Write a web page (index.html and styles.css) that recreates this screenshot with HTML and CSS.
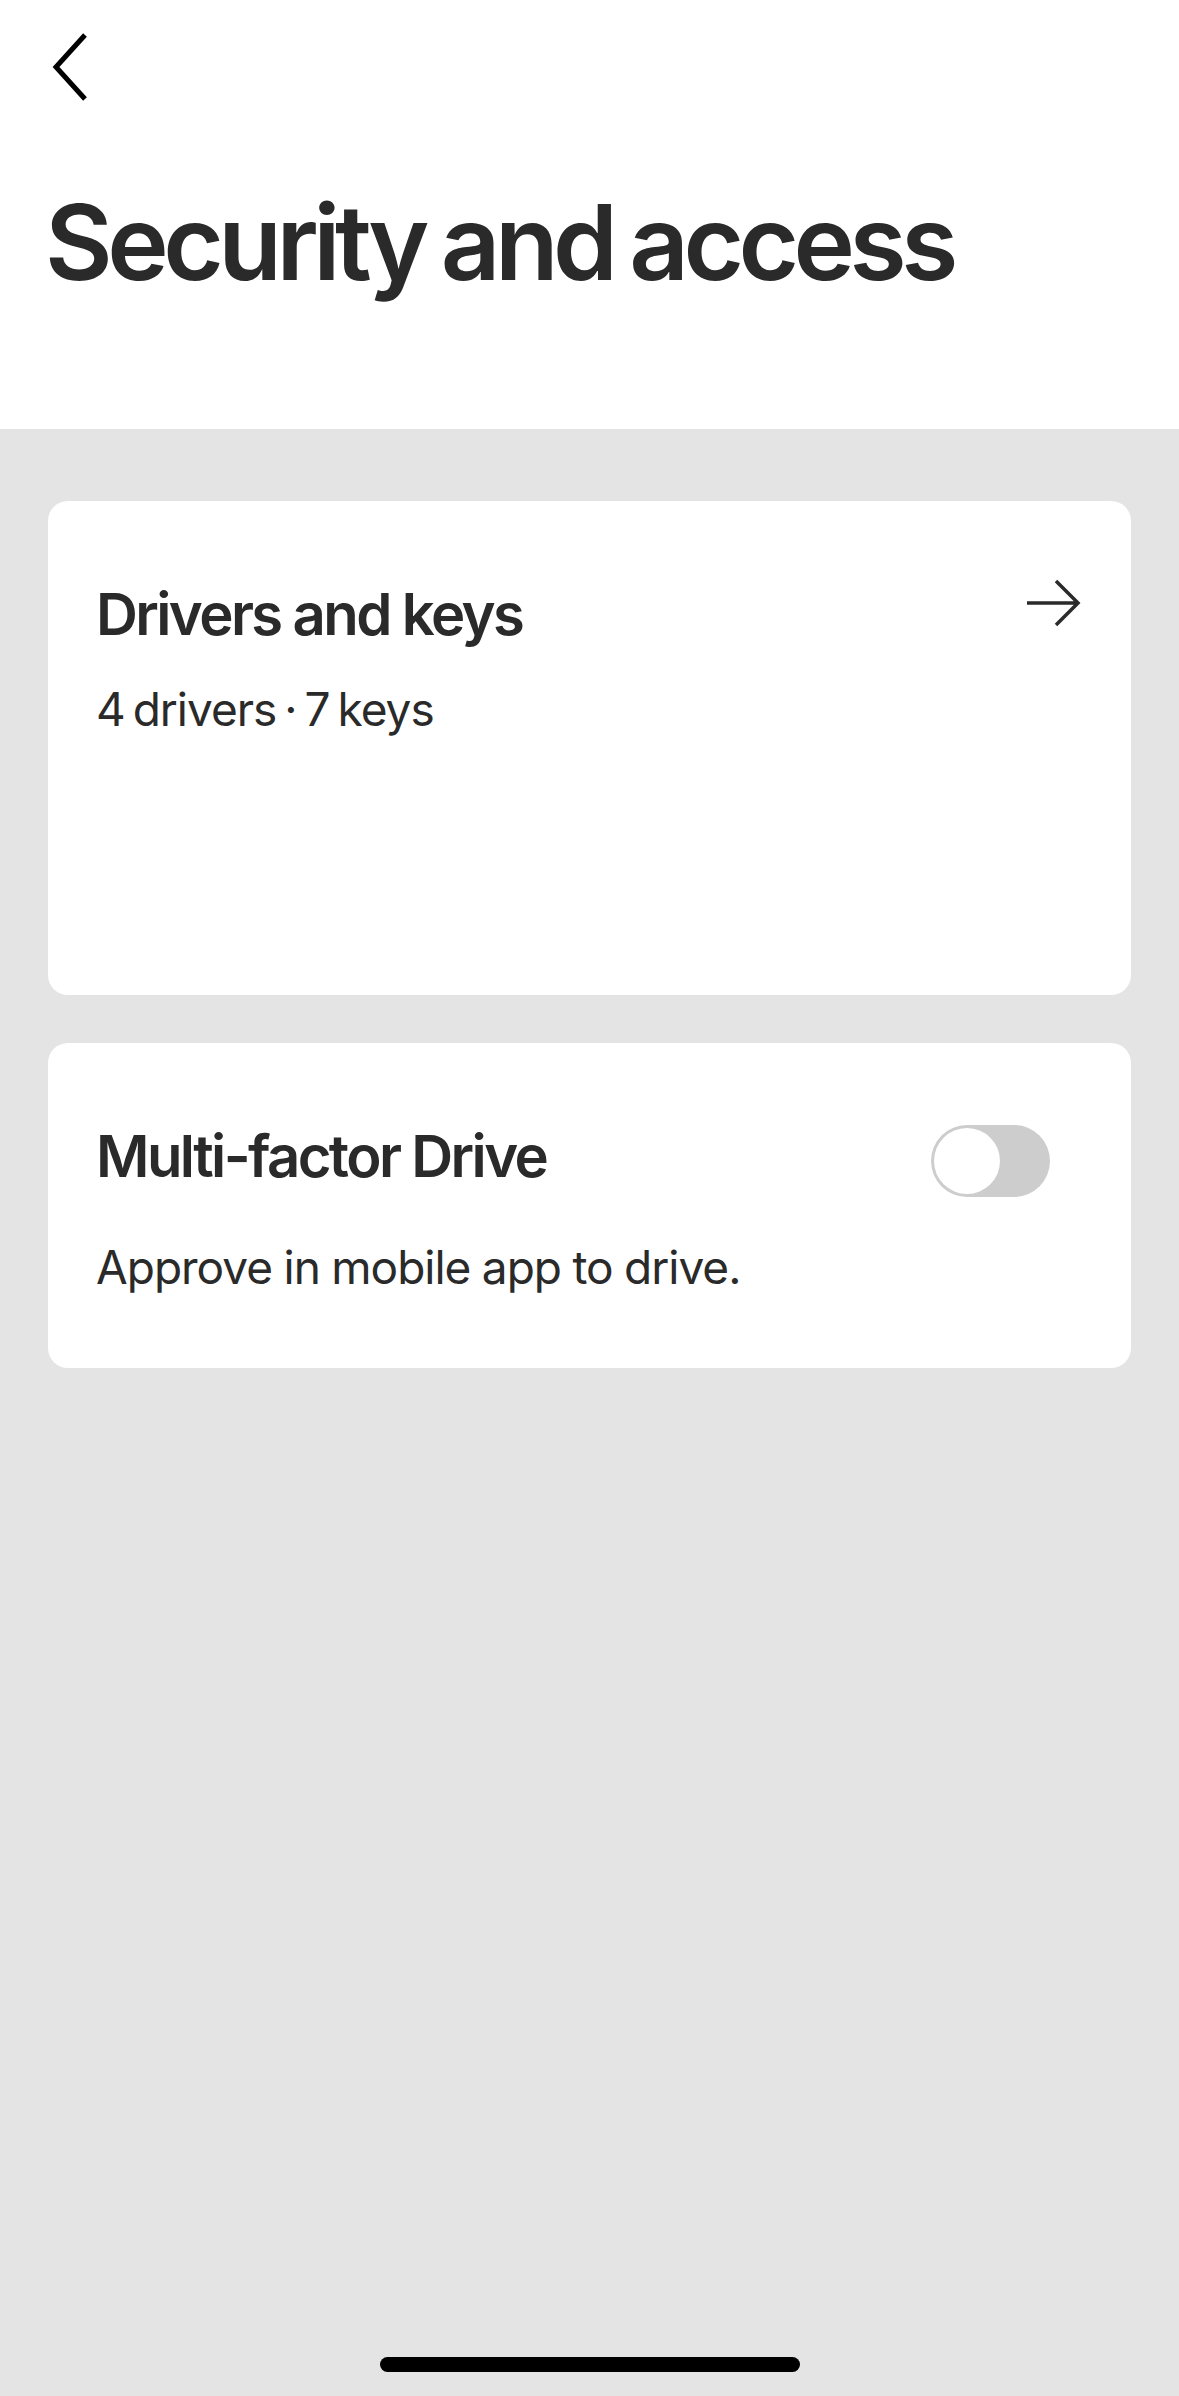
FILE: index.html
```html
<!DOCTYPE html>
<html lang="en">
  <head>
    <meta charset="utf-8">
    <title>Security and access</title>
    <link rel="stylesheet" href="styles.css">
  </head>
  <body>

    <header class="topBar">
      <button class="backButton" aria-label="Back">
        <svg width="40" height="74" viewBox="0 0 40 74">
          <path d="M35 5 L6 37 L35 69" fill="none" stroke="#000" stroke-width="5"/>
        </svg>
      </button>
      <h1>Security and access</h1>
    </header>

    <main class="settings">
      <a class="card driversCard" href="#">
        <div class="cardRow">
          <h2>Drivers and keys</h2>
          <svg class="arrow" width="58" height="50" viewBox="0 0 58 50">
            <path d="M2 25 H53 M31 3 L53 25 L31 47" fill="none" stroke="#2a2a2a" stroke-width="3.5"/>
          </svg>
        </div>
        <p class="cardSub">4 drivers · 7 keys</p>
      </a>

      <section class="card mfaCard">
        <div class="cardRow">
          <h2>Multi-factor Drive</h2>
          <span class="toggle" role="switch" aria-checked="false"><span class="knob"></span></span>
        </div>
        <p class="cardSub mfaSub">Approve in mobile app to drive.</p>
      </section>
    </main>

    <div class="homeBar"></div>

  </body>
</html>
```

FILE: styles.css
```css
body {
  margin: 0;
  min-height: 2396px;
  font-family: Inter, "Noto Sans", sans-serif;
  background: #e4e4e4;
  color: #2a2a2a;
  position: relative;
}
.topBar {
  background: #fff;
  height: 429px;
  box-sizing: border-box;
  padding: 30px 0 0 50px;
}
.backButton {
  display: block;
  border: none;
  background: none;
  padding: 0;
  width: 40px;
  height: 74px;
}
.backButton svg {
  display: block;
}
h1 {
  margin: 86px 0 0 -5px;
  font-size: 104px;
  line-height: 1;
  font-weight: 600;
  letter-spacing: -5.5px;
  word-spacing: -4px;
}
.settings {
  padding: 72px 48px 0;
  display: flex;
  flex-direction: column;
  gap: 48px;
}
.card {
  display: block;
  background: #fff;
  border-radius: 20px;
  padding: 84px 48px 0 48px;
  box-sizing: border-box;
  color: inherit;
  text-decoration: none;
}
.driversCard {
  height: 494px;
}
.mfaCard {
  height: 325px;
}
.cardRow {
  display: flex;
  justify-content: space-between;
  align-items: flex-start;
}
h2 {
  margin: 0;
  font-size: 58px;
  line-height: 1;
  font-weight: 600;
  letter-spacing: -2.6px;
}
.arrow {
  margin-top: -7px;
}
.cardSub {
  margin: 43px 0 0;
  font-size: 46px;
  line-height: 1;
  font-weight: 400;
  letter-spacing: -1px;
  word-spacing: -4px;
}
.mfaSub {
  margin-top: 47px;
  word-spacing: -0.5px;
}
.toggle {
  display: block;
  width: 119px;
  height: 72px;
  margin: -2px 33px 0 0;
  border-radius: 36px;
  background: #cdcdcd;
  padding: 3px;
  box-sizing: border-box;
}
.knob {
  display: block;
  width: 66px;
  height: 66px;
  border-radius: 50%;
  background: #fff;
}
.homeBar {
  position: absolute;
  left: 380px;
  top: 2357px;
  width: 420px;
  height: 15px;
  border-radius: 8px;
  background: #000;
}
```
